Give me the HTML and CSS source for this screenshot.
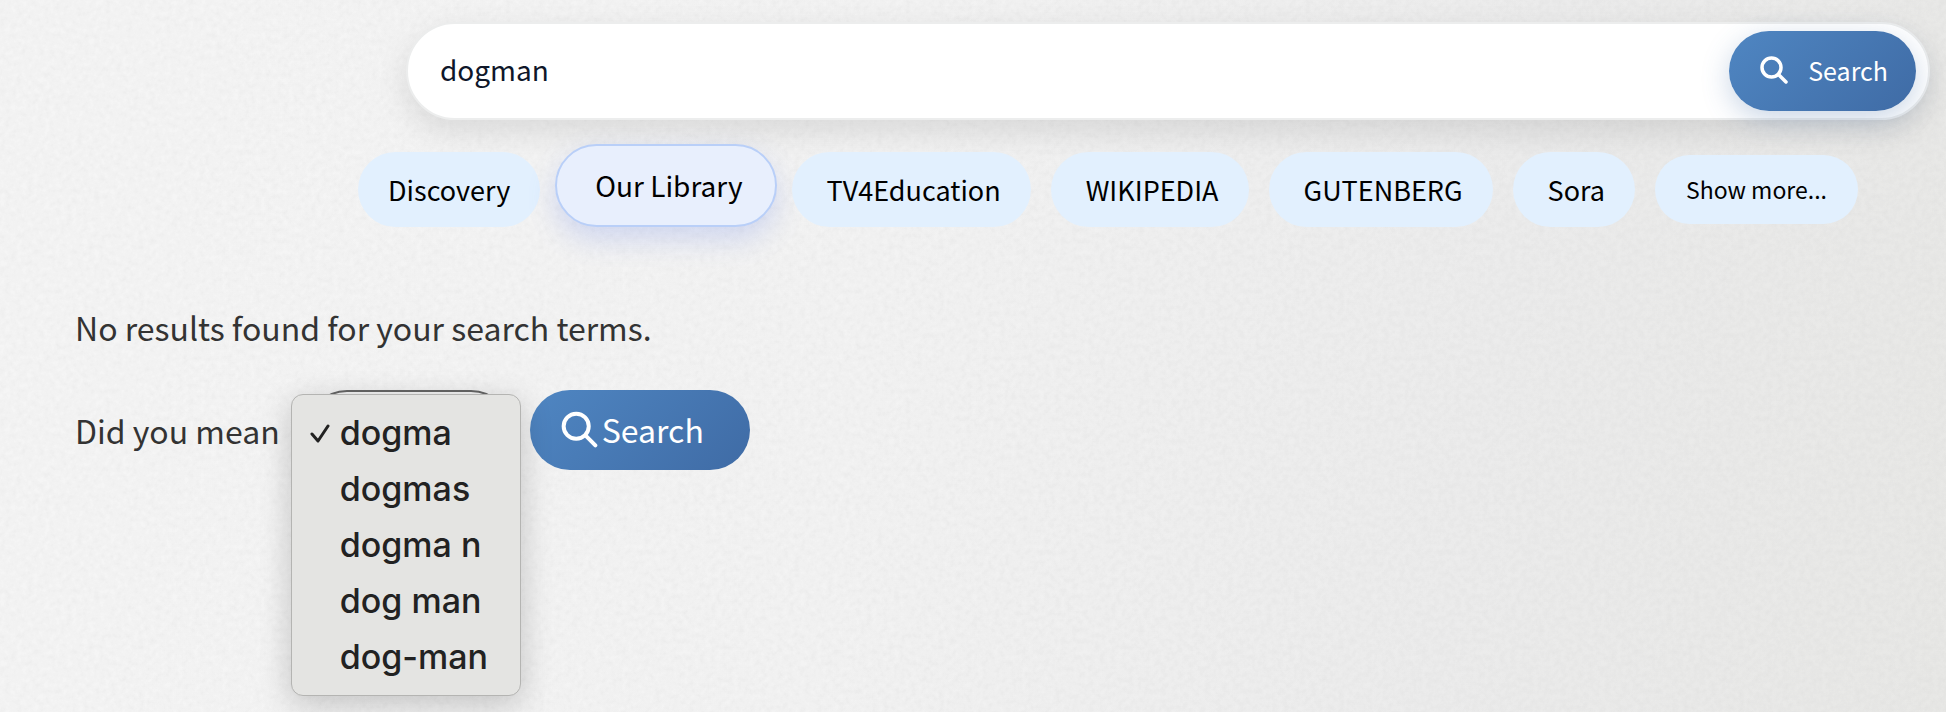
FILE: index.html
```html
<!DOCTYPE html>
<html lang="en">
<head>
    <meta charset="UTF-8">
    <meta name="viewport" content="width=device-width, initial-scale=1.0">
    <title>Search</title>
    <link rel="stylesheet" href="styles.css">
</head>
<body>
    <header class="top">
        <form class="searchbar">
            <input type="text" class="search-input" aria-label="Search terms" value="dogman">
            <button type="button" class="btn search-btn">
                <svg class="icon" viewBox="0 0 56 56" aria-hidden="true">
                    <circle cx="23" cy="23" r="19"></circle>
                    <path d="M37 37L52 52"></path>
                </svg>
                <span>Search</span>
            </button>
        </form>
        <nav class="tabs">
            <a href="#" class="tab tab-first">Discovery</a>
            <a href="#" class="tab active">Our Library</a>
            <a href="#" class="tab">TV4Education</a>
            <a href="#" class="tab">WIKIPEDIA</a>
            <a href="#" class="tab">GUTENBERG</a>
            <a href="#" class="tab">Sora</a>
            <button type="button" class="tab-more">Show more...</button>
        </nav>
    </header>

    <main class="results">
        <p class="message">No results found for your search terms.</p>
        <form class="suggest">
            <label for="suggestion">Did you mean</label>
            <div class="select-wrap">
                <select id="suggestion" class="select">
                    <option selected>dogma</option>
                    <option>dogmas</option>
                    <option>dogma n</option>
                    <option>dog man</option>
                    <option>dog-man</option>
                </select>
                <ul class="menu" role="listbox" aria-label="Suggestions">
                    <li role="option" aria-selected="true">
                        <svg class="check" viewBox="0 0 20 20" aria-hidden="true"><path d="M2 10L8 17L18 2"></path></svg>dogma
                    </li>
                    <li role="option">dogmas</li>
                    <li role="option">dogma n</li>
                    <li role="option">dog man</li>
                    <li role="option">dog-man</li>
                </ul>
            </div>
            <button type="button" class="btn suggest-btn">
                <svg class="icon" viewBox="0 0 56 56" aria-hidden="true">
                    <circle cx="23" cy="23" r="19"></circle>
                    <path d="M37 37L52 52"></path>
                </svg>
                <span>Search</span>
            </button>
        </form>
    </main>
</body>
</html>
```
FILE: styles.css
```css
* {
    box-sizing: border-box;
}

body {
    margin: 0;
    min-height: 100vh;
    font-family: "Noto Sans CJK SC", "Noto Sans", sans-serif;
    color: #333;
    /* paper grain over a light grey fade */
    background:
        url("data:image/svg+xml,%3Csvg xmlns='http://www.w3.org/2000/svg' width='400' height='400'%3E%3Cfilter id='n' x='0' y='0' width='100%25' height='100%25'%3E%3CfeTurbulence type='fractalNoise' baseFrequency='.18' numOctaves='3' stitchTiles='stitch'/%3E%3CfeColorMatrix values='0 0 0 0 .5 0 0 0 0 .5 0 0 0 0 .5 .2 0 0 0 -.05'/%3E%3C/filter%3E%3Crect width='400' height='400' filter='url(%23n)'/%3E%3C/svg%3E"),
        linear-gradient(100deg, #f5f5f5 10%, #f3f3f3 45%, #ececec 75%, #e8e8e6 100%);
}

button,
input,
select {
    font-family: inherit;
}

.top {
    padding-top: 22px;
}

.searchbar {
    display: flex;
    align-items: center;
    margin: 0 16px 0 406px;
    padding: 7px 12px 7px 0;
    background: #fff;
    border: 2px solid #eceded;
    border-radius: 49px;
    box-shadow: 0 12px 32px rgba(0, 0, 0, 0.1);
}

.search-input {
    flex: 1;
    min-width: 0;
    height: 80px;
    padding: 0 32px 4px;
    border: none;
    outline: none;
    background: none;
    font-size: 28px;
    color: #0f172a;
}

.btn {
    display: flex;
    align-items: center;
    height: 80px;
    border: none;
    border-radius: 40px;
    background: linear-gradient(135deg, #4f86c2, #3f6ba5);
    color: #fff;
    cursor: pointer;
}

.search-btn {
    gap: 20px;
    padding: 0 28px 2px 31px;
    font-size: 25px;
    box-shadow: 0 8px 28px rgba(63, 107, 165, 0.28);
}

.icon {
    width: 28px;
    height: 28px;
    fill: none;
    stroke: #fff;
    stroke-width: 7;
    stroke-linecap: round;
}

.tabs {
    display: flex;
    align-items: center;
    gap: 20px;
    margin: 24px 16px 0 358px;
}

.tab,
.tab-more {
    padding: 0 30px 0 35px;
    border: none;
    border-radius: 38px;
    background: #e2f0fe;
    color: #000;
    font-size: 27px;
    line-height: 75px;
    text-decoration: none;
    white-space: nowrap;
}

.tab-first {
    padding-left: 30px;
}

.tab-more {
    padding: 0 31px;
    font-size: 23px;
    line-height: 69px;
}

.active {
    margin: 0 -5px 8px;
    padding: 0 32px 0 38px;
    border: 2px solid #b9cff8;
    border-radius: 42px;
    background: #e8effd;
    font-size: 28px;
    line-height: 79px;
    box-shadow: 0 12px 28px rgba(100, 130, 235, 0.24);
}

.results {
    padding: 60px 75px;
    font-size: 32px;
}

.message {
    margin: 0 0 31px;
    line-height: 64px;
}

.suggest {
    display: flex;
    align-items: center;
}

.select-wrap {
    position: relative;
    margin: 0 19px 0 27px;
}

.select {
    display: block;
    width: 204px;
    height: 80px;
    padding: 0 32px;
    border: 2px solid #666;
    border-radius: 40px;
    background: #f3f3f3;
    font-size: 32px;
    color: #333;
    appearance: none;
}

.menu {
    position: absolute;
    top: 4px;
    left: -16px;
    margin: 0;
    padding: 10px 32px 10px 48px;
    border: 1px solid #b4b4b2;
    border-radius: 12px;
    background: #e4e4e2;
    box-shadow: 0 8px 32px rgba(0, 0, 0, 0.2);
    list-style: none;
    font-family: Inter, sans-serif;
    font-size: 34px;
    font-weight: 500;
    line-height: 56px;
    color: #222;
    white-space: nowrap;
}

.menu li {
    position: relative;
}

.check {
    position: absolute;
    left: -30px;
    top: 19px;
    width: 20px;
    height: 20px;
    fill: none;
    stroke: #222;
    stroke-width: 3;
    stroke-linecap: round;
    stroke-linejoin: round;
}

.suggest-btn {
    gap: 4px;
    padding: 0 46px 2px 31px;
    font-size: 32px;
}

.suggest-btn .icon {
    width: 37px;
    height: 37px;
    stroke-width: 6;
}
```
